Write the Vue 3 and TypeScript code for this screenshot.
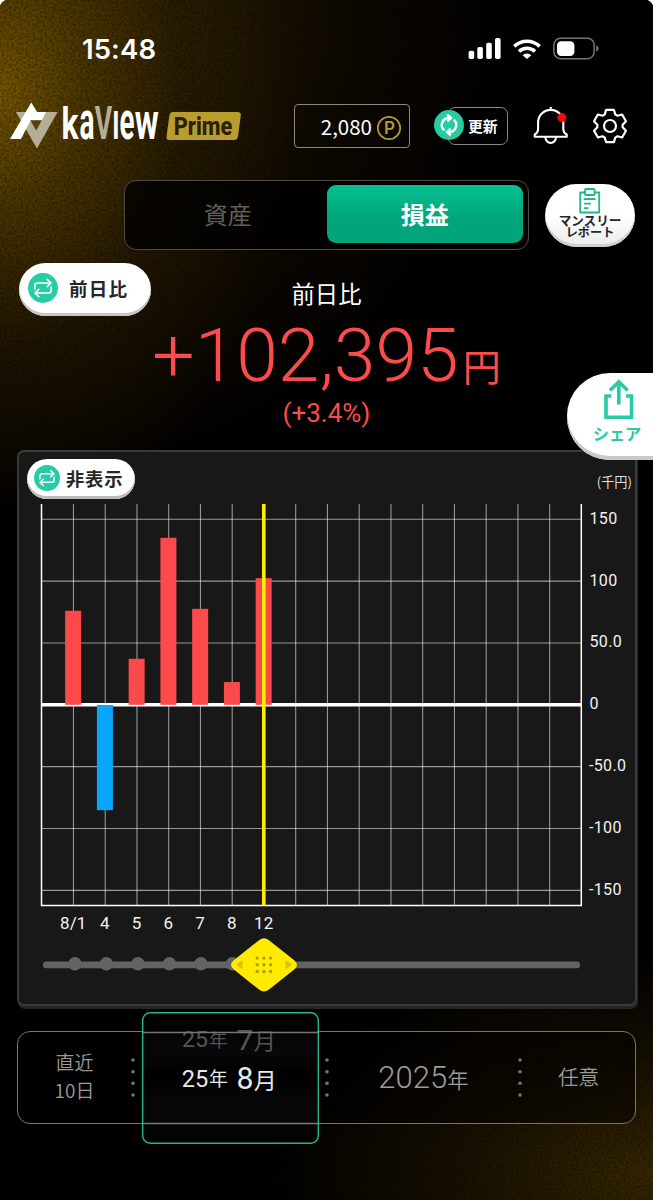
<script setup lang="ts">
interface Bar {
  label: string
  slot: number
  value: number
}

const slotWidth = 31.75
const originX = 41.7
const zeroY = 704.8
const unitY = 61.85 / 50

const bars: Bar[] = [
  { label: '8/1', slot: 1, value: 76 },
  { label: '4', slot: 2, value: -85 },
  { label: '5', slot: 3, value: 37.2 },
  { label: '6', slot: 4, value: 135 },
  { label: '7', slot: 5, value: 77.6 },
  { label: '8', slot: 6, value: 18.4 },
  { label: '12', slot: 7, value: 102.4 },
]

const ticks = [
  { label: '150', value: 150 },
  { label: '100', value: 100 },
  { label: '50.0', value: 50 },
  { label: '0', value: 0 },
  { label: '-50.0', value: -50 },
  { label: '-100', value: -100 },
  { label: '-150', value: -150 },
]

const columns = Array.from({ length: 16 }, (_, i) => i + 1)
const px = (slot: number): number => originX + slot * slotWidth
const py = (value: number): number => zeroY - value * unitY

const grip = [-6.7, 0, 6.7]
const dotRows = [0, 11.7, 23.3, 35]

const tooth: [number, number][] = [[-5.2, -11.6], [-3.9, -16.2], [3.9, -16.2], [5.2, -11.6]]
const gearPoints = Array.from({ length: 6 }, (_, k) => {
  const a = (k * Math.PI) / 3
  return tooth
    .map(([x, y]) => `${(x * Math.cos(a) - y * Math.sin(a)).toFixed(2)},${(x * Math.sin(a) + y * Math.cos(a)).toFixed(2)}`)
    .join(' ')
}).join(' ')
</script>

<template>
  <main class="screen">
    <svg class="grain" width="653" height="1200" aria-hidden="true">
      <filter id="grain" x="0" y="0" width="100%" height="100%">
        <feTurbulence type="fractalNoise" baseFrequency="0.42" numOctaves="2" seed="4" />
        <feColorMatrix values="0 0 0 0 0  0 0 0 0 0  0 0 0 0 0  2.4 0 0 0 -0.85" />
      </filter>
      <rect width="653" height="1200" filter="url(#grain)" />
    </svg>
    <i class="corner left"></i><i class="corner right"></i>

    <div class="status">
      <span class="time">15:48</span>
      <svg class="signals" width="136" height="28" viewBox="465 35 136 28">
        <g fill="#fff">
          <rect x="468.6" y="50.7" width="5.6" height="8.3" rx="1.8" />
          <rect x="477.3" y="47" width="5.6" height="12" rx="1.8" />
          <rect x="486.2" y="42.7" width="5.6" height="16.3" rx="1.8" />
          <rect x="495" y="38" width="5.6" height="21" rx="1.8" />
          <path d="M522.6 55.2a6.2 6.2 0 0 1 8.7 0l-4.3 3.8Z" />
          <rect x="557" y="41.2" width="17.4" height="14.7" rx="4.2" />
        </g>
        <g fill="none" stroke="#fff" stroke-width="3.6">
          <path d="M514.3 46.4a18.2 18.2 0 0 1 25.4 0" />
          <path d="M519 51.5a11.6 11.6 0 0 1 16 0" />
        </g>
        <rect x="553.9" y="38.3" width="40.2" height="20.4" rx="6.5" fill="none" stroke="#77736e" stroke-width="1.5" />
        <path d="M596.2 45.2q2.4.8 2.4 3.3t-2.4 3.3Z" fill="#77736e" />
      </svg>
    </div>

    <header class="top">
      <svg class="logo" width="236" height="52" viewBox="8 100 236 52">
        <path d="M16 112H57.5L37 148.5Z" fill="#b6ad98" />
        <path d="M31.3 102.5L37.2 112H46L41.6 120.4H30.6L21 139H10Z" fill="#fff" />
        <path d="M30.4 120.2H41.8L36.2 130.5Z" fill="#54410b" />
        <g class="wordmark">
          <text x="61.5" y="139" font-size="44.5" textLength="17" lengthAdjust="spacingAndGlyphs">k</text>
          <text x="79.5" y="139" font-size="51" textLength="15" lengthAdjust="spacingAndGlyphs">a</text>
          <text class="muted" x="94.8" y="139" font-size="45.5" textLength="17.4" lengthAdjust="spacingAndGlyphs">V</text>
          <text x="112.3" y="139" font-size="38.8" textLength="7.2" lengthAdjust="spacingAndGlyphs">I</text>
          <text x="119.6" y="139" font-size="51" textLength="15" lengthAdjust="spacingAndGlyphs">e</text>
          <text x="134.8" y="139" font-size="52" textLength="24" lengthAdjust="spacingAndGlyphs">w</text>
        </g>
        <path d="M173 112H237.5Q241.3 112 240.8 115.5L238 136.5Q237.4 140 234 140H169.5Q166 140 166.5 136.5L169.4 115.5Q170 112 173 112Z" fill="#b99d2c" />
        <text class="prime" x="173.8" y="134.6" textLength="58.5" lengthAdjust="spacingAndGlyphs">Prime</text>
      </svg>
      <div class="points">
        <span>2,080</span>
        <svg width="26" height="26" viewBox="-13 -13 26 26">
          <circle r="11.2" fill="none" stroke="#b49a35" stroke-width="1.7" />
          <text class="coin" x=".5" y="6.2" text-anchor="middle">P</text>
        </svg>
      </div>
      <button class="refresh">
        <svg width="30" height="30" viewBox="-15 -15 30 30">
          <circle r="15" fill="#27cba4" />
          <g fill="none" stroke="#fff" stroke-width="2.4">
            <path d="M-4.6 5.4A7 7 0 0 1 .6 -7" /><path d="M-1.8 -10.4L2 -7L-1.6 -3.6" />
            <path d="M4.6 -5.4A7 7 0 0 1 -.6 7" /><path d="M1.8 10.4L-2 7L1.6 3.6" />
          </g>
        </svg>
        <span>更新</span>
      </button>
      <svg class="bell" width="38" height="40" viewBox="532 105 38 40">
        <g fill="none" stroke="#fff" stroke-width="2.1" stroke-linejoin="round">
          <path d="M550.7 107V110M534.7 136.8H566.7V134.4Q563.3 132.7 563.3 129V122.5A12.6 12.6 0 0 0 538.1 122.5V129Q538.1 132.7 534.7 134.4Z" />
          <path d="M545.4 137A5.3 6 0 0 0 556 137" />
        </g>
        <circle cx="561.8" cy="117.6" r="4.5" fill="#f70808" />
      </svg>
      <svg class="gear" width="36" height="36" viewBox="-18 -18 36 36">
        <polygon :points="gearPoints" fill="none" stroke="#fff" stroke-width="2.2" stroke-linejoin="round" />
        <circle r="6" fill="none" stroke="#fff" stroke-width="2.2" />
      </svg>
    </header>

    <div class="modes">
      <div class="tabs">
        <button class="tab">資産</button>
        <button class="tab active">損益</button>
      </div>
      <button class="report">
        <svg width="22" height="26" viewBox="0 0 22 26" fill="none" stroke="#20b985" stroke-width="1.8">
          <path d="M6 4.5H1.2V24.5H20.2V4.5H15.5" stroke-linejoin="round" />
          <rect x="6" y="1" width="9.5" height="6" rx=".8" />
          <path d="M4.7 11H16.5M5 15.6H12M5 20.2H9.5" />
        </svg>
        <span>マンスリー</span><span class="second">レポート</span>
      </button>
    </div>

    <section class="summary">
      <button class="pill large">
        <svg width="30" height="30" viewBox="-15 -15 30 30">
          <circle r="15" fill="#27cba4" />
          <g fill="none" stroke="#fff" stroke-width="1.6" stroke-linejoin="round" stroke-linecap="round">
            <path d="M-8.2 1V-2.2Q-8.2 -5 -5.4 -5H8M4.2 -8.6L8 -5L4.2 -1.4" />
            <path d="M8.2 -1V2.2Q8.2 5 5.4 5H-8M-4.2 8.6L-8 5L-4.2 1.4" />
          </g>
        </svg>
        <span>前日比</span>
      </button>
      <h1>前日比</h1>
      <p class="amount">+102,395<small>円</small></p>
      <p class="rate">(+3.4%)</p>
      <button class="share">
        <svg width="30" height="43" viewBox="0 0 30 43" fill="none" stroke="#27cba4" stroke-width="3.6">
          <path d="M7.5 18H2V39.3H27.5V18H22M14.8 26.5V4M6 12.5L14.8 3.7L23.6 12.5" />
        </svg>
        <span>シェア</span>
      </button>
    </section>

    <section class="card">
      <div class="card-head">
        <button class="pill small">
          <svg width="26" height="26" viewBox="-15 -15 30 30">
            <circle r="15" fill="#27cba4" />
            <g fill="none" stroke="#fff" stroke-width="1.7" stroke-linejoin="round" stroke-linecap="round">
              <path d="M-8.2 1V-2.2Q-8.2 -5 -5.4 -5H8M4.2 -8.6L8 -5L4.2 -1.4" />
              <path d="M8.2 -1V2.2Q8.2 5 5.4 5H-8M-4.2 8.6L-8 5L-4.2 1.4" />
            </g>
          </svg>
          <span>非表示</span>
        </button>
        <span class="unit">(千円)</span>
      </div>
      <svg class="chart" width="616" height="431" viewBox="19 504 616 431">
        <g stroke="#fff" stroke-opacity=".55" stroke-width="1.1">
          <line v-for="c in columns" :key="c" :x1="px(c)" :x2="px(c)" y1="504" y2="905" />
          <line v-for="t in ticks" :key="t.value" x1="41" x2="581" :y1="py(t.value)" :y2="py(t.value)" />
        </g>
        <path d="M41.5 504V905.4H581.3V504" fill="none" stroke="#fff" stroke-width="1.5" />
        <path d="M41 704.8H581" stroke="#fff" stroke-width="3.4" />
        <rect
          v-for="b in bars" :key="b.slot" :x="px(b.slot) - 8.3" width="16"
          :y="b.value > 0 ? py(b.value) : 705" :height="Math.abs(b.value) * unitY"
          :fill="b.value > 0 ? '#fc4949' : '#0aa5ff'"
        />
        <path d="M263.8 504V905" stroke="#ffee0a" stroke-width="3.6" />
        <g class="axis">
          <text v-for="t in ticks" :key="t.value" :x="t.value < 0 ? 588.9 : 589.4" :y="py(t.value) + 4.5">{{ t.label }}</text>
        </g>
        <g class="days">
          <text v-for="b in bars" :key="b.slot" :x="px(b.slot) - 0.3" y="928.7" text-anchor="middle">{{ b.label }}</text>
        </g>
      </svg>
      <svg class="slider" width="616" height="68" viewBox="19 935 616 68">
        <rect x="43" y="961.5" width="537" height="6.7" rx="3.3" fill="#636363" />
        <circle v-for="n in 6" :key="n" :cx="43.4 + n * 31.5" cy="963.7" r="6.7" fill="#636363" />
        <path d="M259 940.2Q264 936.2 269 940.2L294.5 960.5Q299.5 965 294.5 969.3L269 989.6Q264 993.6 259 989.6L233.5 969.3Q228.5 965 233.5 960.5Z" fill="#ffea00" />
        <g fill="#ada111">
          <template v-for="y in grip" :key="y">
            <circle v-for="x in grip" :key="x" :cx="263.9 + x" :cy="964.8 + y" r="1.7" />
          </template>
        </g>
        <path d="M242.4 960V969.5L236.2 964.8ZM285.5 960V969.5L291.7 964.8Z" fill="#d3c30c" />
      </svg>
    </section>

    <nav class="period">
      <div class="recent"><span>直近</span><span>10日</span></div>
      <svg class="dots" width="4" height="39" viewBox="-2 -2 4 39"><circle v-for="y in dotRows" :key="y" :cy="y" r="1.8" /></svg>
      <div class="month">
        <svg class="wheel" width="177" height="132" viewBox="141.5 1011.5 177 132">
          <defs>
            <linearGradient id="wheelShade" x1="0" y1="0" x2="0" y2="1">
              <stop offset="0" stop-color="#000" /><stop offset=".3" stop-color="#08080a" />
              <stop offset=".48" stop-color="#000" /><stop offset=".72" stop-color="#08080a" /><stop offset="1" stop-color="#020202" />
            </linearGradient>
          </defs>
          <rect x="143" y="1013" width="174" height="129" rx="6" fill="url(#wheelShade)" />
          <g fill="#555">
            <text x="181.5" y="1046.5" font-size="21.5" textLength="26" lengthAdjust="spacingAndGlyphs">25</text>
            <text class="jp" x="208.5" y="1046" font-size="18.5">年</text>
            <text x="236" y="1049.7" font-size="27.5" textLength="17" lengthAdjust="spacingAndGlyphs">7</text>
            <text class="jp" x="253.3" y="1048.6" font-size="22">月</text>
          </g>
          <g fill="#e8e8e8">
            <text x="181.2" y="1086.3" font-size="24.5" textLength="26.5" lengthAdjust="spacingAndGlyphs">25</text>
            <text class="jp" x="208.5" y="1085.8" font-size="18.8">年</text>
            <text x="236" y="1088.6" font-size="31" textLength="17" lengthAdjust="spacingAndGlyphs">8</text>
            <text class="jp" x="253.3" y="1088.2" font-size="23">月</text>
          </g>
          <path d="M142 1032H318M142 1123H318" stroke="#777" stroke-width="1.5" />
          <rect x="142.2" y="1012.2" width="175.6" height="130.6" rx="7.5" fill="none" stroke="#27b58c" stroke-width="1.4" />
        </svg>
      </div>
      <svg class="dots" width="4" height="39" viewBox="-2 -2 4 39"><circle v-for="y in dotRows" :key="y" :cy="y" r="1.8" /></svg>
      <div class="year">2025<small>年</small></div>
      <svg class="dots" width="4" height="39" viewBox="-2 -2 4 39"><circle v-for="y in dotRows" :key="y" :cy="y" r="1.8" /></svg>
      <div class="custom">任意</div>
    </nav>
  </main>
</template>

<style>
body { margin: 0; background: #000; }
</style>

<style scoped>
* { box-sizing: border-box; }
svg { display: block; flex: none; }
button { border: 0; padding: 0; margin: 0; background: none; font: inherit; color: inherit; }
p, h1 { margin: 0; }
.screen {
  position: relative; width: 653px; height: 1200px; overflow: hidden; color: #fff;
  font-family: "Noto Sans CJK JP", sans-serif;
  display: flex; flex-direction: column;
  background:
    radial-gradient(ellipse 300px 430px at 0 90px, rgba(122, 90, 0, .95) 0, rgba(84, 61, 0, .8) 28%, rgba(48, 33, 0, .5) 60%, transparent 100%),
    radial-gradient(ellipse 480px 520px at 60px 0, rgba(66, 47, 0, .8), rgba(22, 14, 0, .6) 62%, transparent 100%),
    radial-gradient(ellipse 400px 230px at 100% 1175px, #382800 0, #1a1200 45%, transparent 100%),
    #000;
}
.screen > * { position: relative; flex: none; }
.screen > .grain { position: absolute; inset: 0; opacity: .34; }
.screen > .corner { position: absolute; top: 0; width: 10px; height: 10px; }
.corner.left { left: 0; background: radial-gradient(circle at 100% 100%, transparent 10.5px, #fff 11.5px); }
.corner.right { right: 0; background: radial-gradient(circle at 0 100%, transparent 10.5px, #fff 11.5px); }

.status { height: 98px; display: flex; justify-content: space-between; align-items: flex-start; padding: 35px 52px 0 82px; }
.time { font: 600 27.5px/28px Inter, sans-serif; letter-spacing: .1px; }

.top { height: 82px; display: flex; align-items: flex-start; }
.logo { margin: 2px 0 0 8px; overflow: visible; }
.wordmark { font-family: Roboto, sans-serif; font-weight: 700; fill: #fff; }
.wordmark .muted { fill: #b6ad98; }
.prime { font: 800 26.5px Roboto, sans-serif; fill: #2d2000; }
.points { margin: 6px 0 0 50px; width: 116px; height: 44px; border: 1.5px solid #8b8783; border-radius: 4px; display: flex; align-items: center; justify-content: flex-end; gap: 4px; padding-right: 7px; font-size: 20.5px; line-height: 40px; }
.points svg { margin-top: 4px; }
.coin { font: 600 17px Inter, sans-serif; fill: #b49a35; }
.refresh { margin: 9px 0 0 38px; width: 60px; height: 38px; border: 1.5px solid #8b8783; border-radius: 7px; display: flex; align-items: center; font-size: 14.8px; font-weight: 700; background: #000; }
.refresh span { margin-top: -2px; }
.refresh svg { margin: -2px 4px 0 -15px; }
.bell { margin: 7px 0 0 24px; }
.gear { margin: 9.5px 0 0 22px; }

.modes { height: 83px; display: flex; align-items: flex-start; padding-left: 124px; }
.tabs { width: 405px; height: 70px; border: 1.5px solid #4e4b47; border-radius: 12px; display: flex; padding: 4px 5px 6px 4px; background: rgba(0, 0, 0, .78); }
.tab { width: 198px; font-size: 24px; font-weight: 400; color: #605e59; line-height: 58px; }
.tab.active { width: 197px; border-radius: 9px; color: #fff; font-weight: 700; background: linear-gradient(#06c091, #02a47b 60%); margin-left: auto; }
.report { margin: 4px 0 0 16px; width: 90px; height: 63px; border-radius: 32px; background: linear-gradient(#fff 50%, #efeff2 90%); box-shadow: inset 0 -3px #d0d0d3; color: #262626; font-size: 12.6px; font-weight: 700; line-height: 13.4px; display: flex; flex-direction: column; align-items: center; padding-top: 4px; }
.report span { white-space: nowrap; }
.report svg { margin-bottom: -1px; }
.report .second { font-size: 12.2px; }

.summary { height: 187px; display: flex; flex-direction: column; align-items: center; }
.pill { display: flex; align-items: center; background: #fff; color: #262626; font-weight: 700; }
.pill.large { align-self: flex-start; margin-left: 19px; width: 132px; height: 53px; border-radius: 27px; box-shadow: inset 0 -3px #c6c6c6; padding: 0 0 3px 9px; gap: 11px; font-size: 18.5px; letter-spacing: 1.2px; }
.pill.small { width: 108px; height: 40px; border-radius: 20px; box-shadow: inset 0 -3px #bdbdbd; padding: 0 0 3px 7px; gap: 6px; font-size: 18.3px; letter-spacing: .8px; }
.summary h1 { margin-top: -41px; font-size: 23.3px; line-height: 36px; font-weight: 400; }
.amount { font: 300 75px/88px Roboto, sans-serif; color: #fc4b4b; white-space: nowrap; }
.amount small { font: 400 38px/40px "Noto Sans CJK JP", sans-serif; margin-left: 4px; }
.rate { font: 400 26px/30px Roboto, sans-serif; color: #fc4b4b; margin-top: -1px; }
.share { position: absolute; z-index: 2; left: 567px; top: 110px; width: 86px; height: 87px; border-radius: 43px 0 0 43px; background: #fff; box-shadow: inset 0 -4px #c9c9c9; color: #27cba4; font-weight: 700; font-size: 16.2px; line-height: 20px; display: flex; flex-direction: column; align-items: center; padding: 5px 0 0 14px; }
.share svg { margin-left: 3px; }
.share span { margin-top: 2px; white-space: nowrap; }

.card { margin-left: 17px; width: 620px; height: 556px; border: 2px solid #3a3a3a; border-radius: 7px; background: #181818; box-shadow: 1px 3px #242424; }
.card-head { height: 52px; display: flex; justify-content: space-between; align-items: flex-start; padding: 7px 3px 0 8px; }
.unit { font-size: 13.2px; line-height: 20px; margin-top: 13px; color: #ddd; }
.axis { font: 400 16px Roboto, sans-serif; letter-spacing: .4px; fill: #f2f2f2; }
.days { font: 400 17px Roboto, sans-serif; fill: #f2f2f2; }

.period { margin: 25px 0 0 17px; width: 619px; height: 93px; border: 1.5px solid #777471; border-radius: 13px; display: flex; align-items: center; color: #9d9b98; background: rgba(0, 0, 0, .45); }
.recent { width: 113px; margin-top: -4px; display: flex; flex-direction: column; align-items: center; font-size: 19px; line-height: 28px; font-weight: 350; }
.dots circle { fill: #77746f; }
.dots { width: 4px; }
.month { width: 190px; }
.wheel { margin: 0 0 0 6.5px; font-family: Roboto, sans-serif; }
.wheel .jp { font-family: "Noto Sans CJK JP", sans-serif; }
.year { width: 189px; text-align: center; font: 300 31px/44px Roboto, sans-serif; }
.year small { font: 350 21.5px/30px "Noto Sans CJK JP", sans-serif; }
.custom { flex: 1; text-align: center; font-size: 20.5px; font-weight: 350; margin-top: -3px; }
</style>
